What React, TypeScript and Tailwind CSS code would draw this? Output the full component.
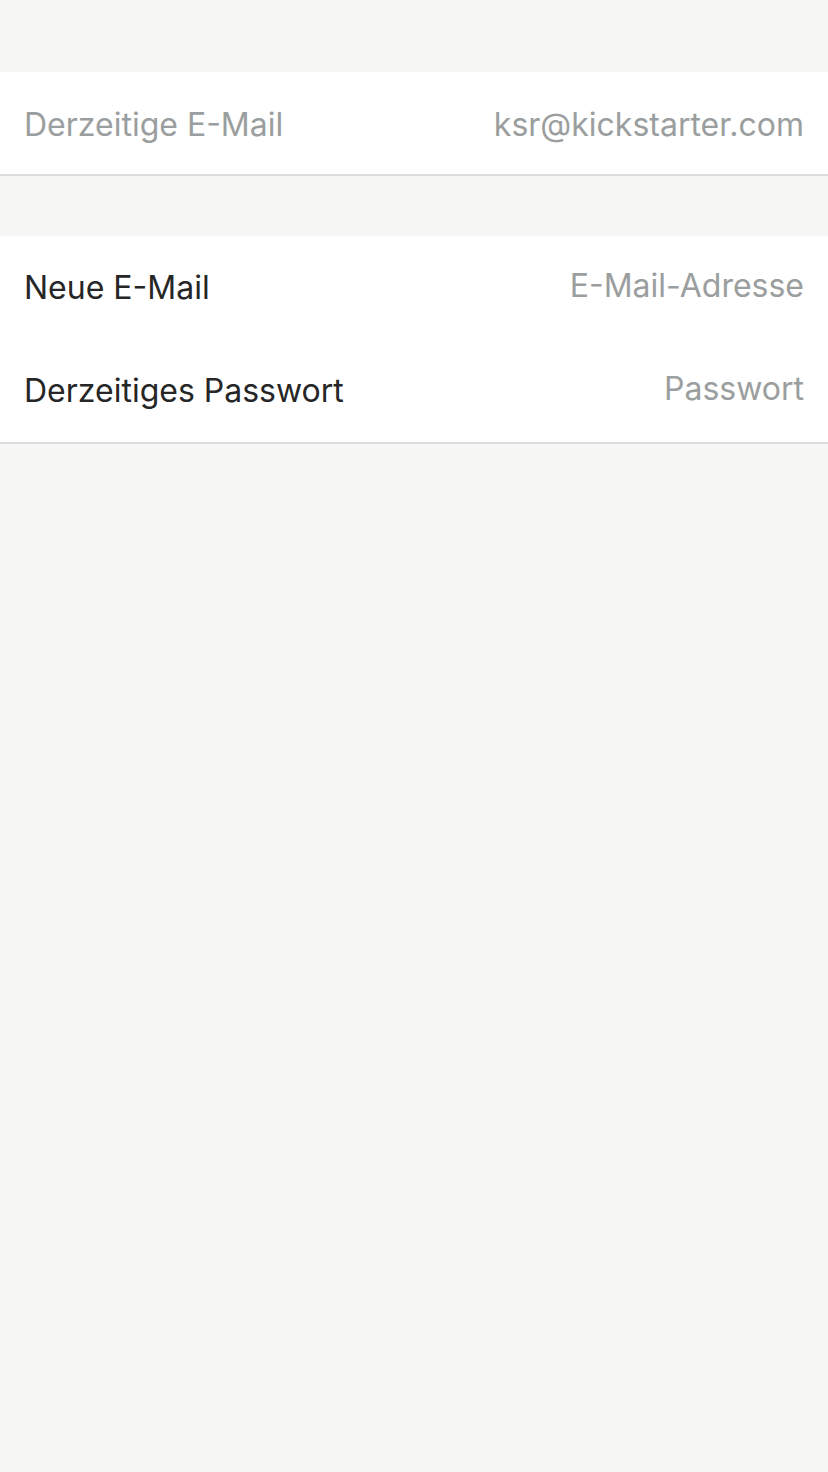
const font = { fontFamily: 'Inter, "Noto Sans", sans-serif' }

function Row({ label, value }: { label: string; value: string }) {
  return (
    <div className="flex items-center justify-between h-[103px] px-6">
      <span className="text-[32px] text-[#262626]">{label}</span>
      <span className="text-[32px] text-[#9b9e9e] -mt-1">{value}</span>
    </div>
  )
}

export default function App() {
  return (
    <div className="min-h-[1472px] bg-[#f6f6f5] pt-[72px]" style={font}>
      <div className="bg-white border-b-2 border-[#dcdcdc]">
        <div className="flex items-center justify-between h-[102px] px-6 pt-1">
          <span className="text-[32px] text-[#9b9e9e]">Derzeitige E-Mail</span>
          <span className="text-[32px] text-[#9b9e9e]">ksr@kickstarter.com</span>
        </div>
      </div>
      <div className="bg-white border-b-2 border-[#dcdcdc] mt-[60px]">
        <Row label="Neue E-Mail" value="E-Mail-Adresse" />
        <Row label="Derzeitiges Passwort" value="Passwort" />
      </div>
    </div>
  )
}
